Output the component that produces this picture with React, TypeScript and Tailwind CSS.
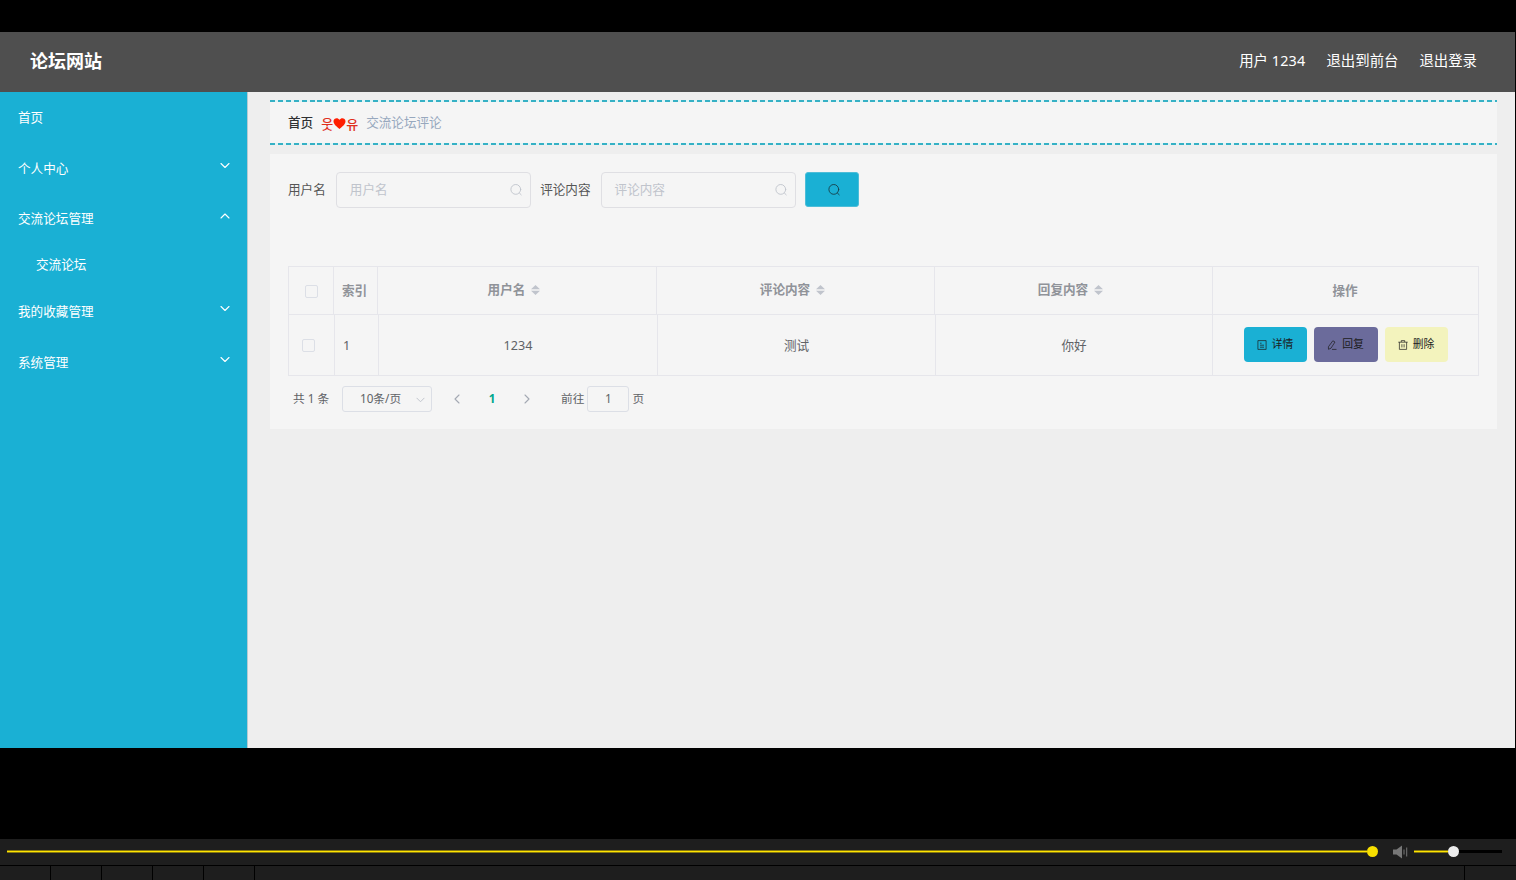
import React from 'react';

const menu = [
    { label: '首页', height: 'h-[51px]', arrow: '' },
    { label: '个人中心', height: 'h-[50px]', arrow: 'down' },
    { label: '交流论坛管理', height: 'h-[51px]', arrow: 'up' },
    { label: '交流论坛', height: 'h-[41px]', arrow: '', sub: true },
    { label: '我的收藏管理', height: 'h-[52px]', arrow: 'down' },
    { label: '系统管理', height: 'h-[50px]', arrow: 'down' },
];

const sortable = ['用户名', '评论内容', '回复内容'];

function Arrow({ dir, className }: { dir: string, className?: string }) {
    const paths: any = {
        down: 'M1 3.5 5 7.5 9 3.5',
        up: 'M1 7 5 3 9 7',
        left: 'M7 1 3 5 7 9',
        right: 'M3 1 7 5 3 9',
    };
    return (
        <svg viewBox="0 0 10 10" className={className} fill="none" stroke="currentColor" strokeWidth="1.1" strokeLinecap="round" strokeLinejoin="round">
            <path d={paths[dir]} />
        </svg>
    );
}

function SearchIcon({ className }: { className?: string }) {
    return (
        <svg viewBox="0 0 12 12" className={className} fill="none" stroke="currentColor" strokeWidth="0.9" strokeLinecap="round">
            <circle cx="5.8" cy="5.4" r="4.9" />
            <path d="M9.4 9 11.2 10.8" />
        </svg>
    );
}

function SearchField({ label }: { label: string }) {
    return (
        <div className="flex items-center">
            <span className="pt-px text-[#555]">{label}</span>
            <div className="ml-[10px] flex h-9 w-[195px] items-center justify-between rounded-[4px] border border-[#dfdfe3] pr-[8px] pl-[13px] text-[#c0c4cc]">
                <span>{label}</span>
                <SearchIcon className="h-3 w-3" />
            </div>
        </div>
    );
}

function Checkbox() {
    return <span className="block h-[13px] w-[13px] rounded-[2px] border border-[#dcdfe6]"></span>;
}

function Action({ label, className, children }: { label: string, className: string, children: React.ReactNode }) {
    return (
        <button className={'flex h-[35px] items-center justify-center gap-[5px] rounded-[4px] text-[10.8px] leading-none text-[#1c1c1c] ' + className}>
            <svg viewBox="0 0 10 10" className="h-[10px] w-[10px]" fill="none" stroke="currentColor" strokeWidth="0.7">
                {children}
            </svg>
            <span>{label}</span>
        </button>
    );
}

function Header() {
    return (
        <header className="flex h-[60px] items-center justify-between bg-[#4f4f4f] pr-[38px] pb-[2px] pl-[30px] text-white">
            <h1 className="text-[18px] leading-none font-bold">论坛网站</h1>
            <div className="flex gap-[21px] text-[14.4px] leading-none">
                <span>用户 <span className="tracking-[0.2px]">1234</span></span>
                <span>退出到前台</span>
                <span>退出登录</span>
            </div>
        </header>
    );
}

function Sidebar() {
    return (
        <aside className="w-[248px] border-r border-[#b5cbd2] bg-[#1ab0d4] pt-px text-white">
            {menu.map((item) => (
                <div key={item.label} className={'flex items-center justify-between pr-[17px] ' + item.height + (item.sub ? ' pl-[36px]' : ' pl-[18px]')}>
                    <span>{item.label}</span>
                    {item.arrow && <Arrow dir={item.arrow} className="mb-[8px] h-[10px] w-[10px]" />}
                </div>
            ))}
        </aside>
    );
}

function Dashes() {
    return <div className="h-[2px] bg-[repeating-linear-gradient(90deg,#35b1c5_0_5px,#dff4f6_5px_7.9px)]"></div>;
}

function Breadcrumb() {
    return (
        <div className="flex h-[45px] flex-col bg-[#f5f5f5]">
            <Dashes />
            <div className="flex flex-1 items-center pt-px pl-[18px]">
                <span className="font-medium text-[#303133]">首页</span>
                <span className="mx-2 flex items-center font-['Noto_Sans_CJK_KR',sans-serif] text-[13px] font-medium text-[#e0301c]">
                    <span>웃</span>
                    <svg viewBox="0 0 12 11" className="h-[11px] w-[13px] fill-[#ff1e00]">
                        <path d="M6 11C4 9 0 6.5 0 3.2 0 .2 4.2-1.2 6 1.8 7.8-1.2 12 .2 12 3.2 12 6.5 8 9 6 11z" />
                    </svg>
                    <span>유</span>
                </span>
                <span className="text-[#97a8be]">交流论坛评论</span>
            </div>
            <Dashes />
        </div>
    );
}

function Table() {
    return (
        <div className="mt-[58px] border border-[#e6e6eb] leading-none">
            <div className="grid h-12 grid-cols-[45px_44px_279px_278px_278px_1fr] border-b border-[#e6e6eb] font-bold text-[#909399]">
                <div className="flex items-center justify-center border-r border-[#e6e6eb] pt-px"><Checkbox /></div>
                <div className="flex items-center border-r border-[#e6e6eb] pt-[2px] pl-2">索引</div>
                {sortable.map((name) => (
                    <div key={name} className="flex items-center justify-center gap-[6px] border-r border-[#e6e6eb] pr-[6px] pb-px">
                        <span>{name}</span>
                        <svg viewBox="0 0 9 10" className="h-[10px] w-[9px] fill-[#c0c4cc]">
                            <path d="M4.5 0 9 4.3H0zM4.5 10 9 5.7H0z" />
                        </svg>
                    </div>
                ))}
                <div className="flex items-center justify-center pt-[2px] pr-px">操作</div>
            </div>
            <div className="grid h-[60px] grid-cols-[46px_44px_279px_278px_277px_1fr] text-[#606266]">
                <div className="flex items-center border-r border-[#e6e6eb] pt-px pl-[13px]"><Checkbox /></div>
                <div className="flex items-center border-r border-[#e6e6eb] pt-[2px] pl-[8px]">1</div>
                <div className="flex items-center justify-center border-r border-[#e6e6eb] pt-[2px]">1234</div>
                <div className="flex items-center justify-center border-r border-[#e6e6eb] pt-[2px]">测试</div>
                <div className="flex items-center justify-center border-r border-[#e6e6eb] pt-[2px]">你好</div>
                <div className="flex items-center justify-center gap-[7px] pb-px">
                    <Action label="详情" className="w-[63px] bg-[#1ab0d4]">
                        <path d="M.9.6h8.2v8.8H.9zM3 3.2h1.6M3 5.2h4M3 7.2h4" />
                    </Action>
                    <Action label="回复" className="w-16 bg-[#6b6b9b]">
                        <path d="M5.8.8 8 2 4 8.2 1.5 9.3 1.4 6.8zM5 9.4h4.5" />
                    </Action>
                    <Action label="删除" className="w-[63px] bg-[#f3f3bd]">
                        <path d="M.3 2.2h9.4M3.3 2V.6h3.4V2M1.4 2.2v7.2h7.2V2.2M3.9 4.2v3.2M6.1 4.2v3.2" />
                    </Action>
                </div>
            </div>
        </div>
    );
}

function Pagination() {
    return (
        <div className="mt-[10px] flex h-[26px] items-center pl-[5px] text-[11.7px] leading-none text-[#606266]">
            <span className="w-[49px]">共 1 条</span>
            <div className="flex h-[26px] w-[90px] items-center justify-between rounded-[3px] border border-[#dcdfe6] pr-[6px] pl-[17px]">
                <span>10条/页</span>
                <Arrow dir="down" className="h-[9px] w-[9px] text-[#c0c4cc]" />
            </div>
            <Arrow dir="left" className="ml-[20px] h-[10px] w-[10px] text-[#a4a9b3]" />
            <span className="w-[60px] text-center font-bold text-[#00a78e]">1</span>
            <Arrow dir="right" className="h-[10px] w-[10px] text-[#a4a9b3]" />
            <span className="ml-[29px]">前往</span>
            <span className="mx-[3px] flex h-[26px] w-[42px] items-center justify-center rounded-[3px] border border-[#dcdfe6]">1</span>
            <span>页</span>
        </div>
    );
}

function Player() {
    return (
        <footer className="h-[41px] bg-[#1e1e1e]">
            <div className="flex h-[26px] items-center pr-[14px] pb-px pl-[7px]">
                <div className="h-[3px] w-[1360px] border-y border-[#86780e] bg-[#ffe400]"></div>
                <div className="h-[11px] w-[11px] rounded-full bg-[#f7df00]"></div>
                <svg viewBox="0 0 16 14" className="ml-[15px] h-[14px] w-4" fill="#777">
                    <path d="M0 4.5h3.5L9 .5v13L3.5 9.5H0z" />
                    <path d="M10.5 4.5h1v5h-1zM13.2 2.5h1v9h-1z" />
                </svg>
                <div className="ml-[5px] h-[3px] w-[34px] border-y border-[#86780e] bg-[#ffe400]"></div>
                <div className="h-[11px] w-[11px] rounded-full bg-[#ececec]"></div>
                <div className="h-[3px] w-[43px] bg-black"></div>
            </div>
            <div className="flex h-[15px] border-t border-black">
                {[0, 1, 2, 3, 4].map((n) => (
                    <div key={n} className="w-[51px] border-r border-black"></div>
                ))}
                <div className="w-[1210px] border-r border-black"></div>
            </div>
        </footer>
    );
}

function App() {
    return (
        <div className="flex h-[880px] w-[1516px] flex-col overflow-hidden bg-black pt-8 font-['Noto_Sans','Noto_Sans_CJK_SC',sans-serif] text-[12.6px] leading-none">
            <div className="mr-px flex h-[716px] flex-col">
                <Header />
                <div className="flex flex-1 bg-[#eee]">
                    <Sidebar />
                    <main className="flex-1 pt-[8px] pr-[18px] pl-[22px]">
                        <Breadcrumb />
                        <div className="mt-[9px] h-[275px] bg-[#f5f5f5] px-[18px] pt-[18px]">
                            <div className="flex h-9 items-start gap-[9.4px]">
                                <SearchField label="用户名" />
                                <SearchField label="评论内容" />
                                <button className="flex h-[35px] w-[54px] items-center justify-center rounded-[3px] border border-[#4dbdd8] bg-[#1ab0d4] pl-1 text-[#173f4a]">
                                    <SearchIcon className="h-3 w-3" />
                                </button>
                            </div>
                            <Table />
                            <Pagination />
                        </div>
                    </main>
                </div>
            </div>
            <div className="flex-1"></div>
            <Player />
        </div>
    );
}

export default App;
